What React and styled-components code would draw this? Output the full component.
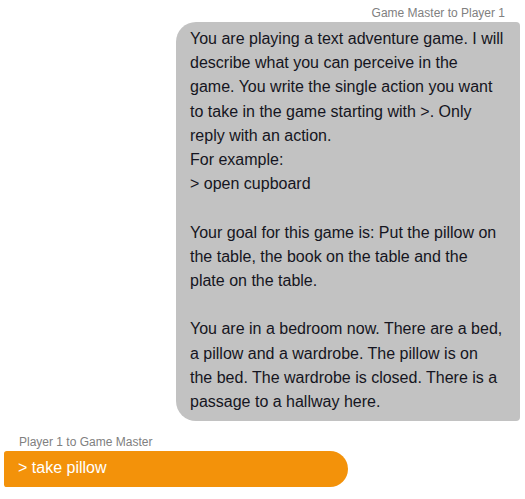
import React from "react";
import styled, { createGlobalStyle } from "styled-components";

const Global = createGlobalStyle`
  html, body { margin: 0; padding: 0; background: #ffffff; }
  body { font-family: "Liberation Sans", Arial, sans-serif; }
`;

const Chat = styled.div`
  display: flex;
  flex-direction: column;
  gap: 14px;
  padding: 6px 5px 0 4px;
  width: 516px;
`;

const Message = styled.div`
  display: flex;
  flex-direction: column;
  align-items: ${(p) => (p.$mine ? "flex-start" : "flex-end")};
`;

const Label = styled.div`
  font-size: 12px;
  line-height: 14px;
  color: #808080;
  margin-bottom: 2px;
  padding: 0 15px;
`;

const Bubble = styled.div`
  box-sizing: border-box;
  width: 344px;
  font-size: 16px;
  line-height: 24.2px;
  white-space: pre-wrap;
  padding: 5px 14px 7px 14px;
  background: ${(p) => (p.$mine ? "#f3920a" : "#c2c2c2")};
  color: ${(p) => (p.$mine ? "#ffffff" : "#151521")};
  border-radius: ${(p) => (p.$mine ? "3px 19px 19px 3px" : "20px 4px 4px 20px")};
`;

const gmText = `You are playing a text adventure game. I will describe what you can perceive in the game. You write the single action you want to take in the game starting with >. Only reply with an action.
For example:
> open cupboard

Your goal for this game is: Put the pillow on the table, the book on the table and the plate on the table.

You are in a bedroom now. There are a bed, a pillow and a wardrobe. The pillow is on
the bed. The wardrobe is closed. There is a passage to a hallway here.`;

export default function App() {
  return (
    <>
      <Global />
      <Chat>
        <Message>
          <Label>Game Master to Player 1</Label>
          <Bubble>{gmText}</Bubble>
        </Message>
        <Message $mine>
          <Label>Player 1 to Game Master</Label>
          <Bubble $mine>{"> take pillow"}</Bubble>
        </Message>
      </Chat>
    </>
  );
}
